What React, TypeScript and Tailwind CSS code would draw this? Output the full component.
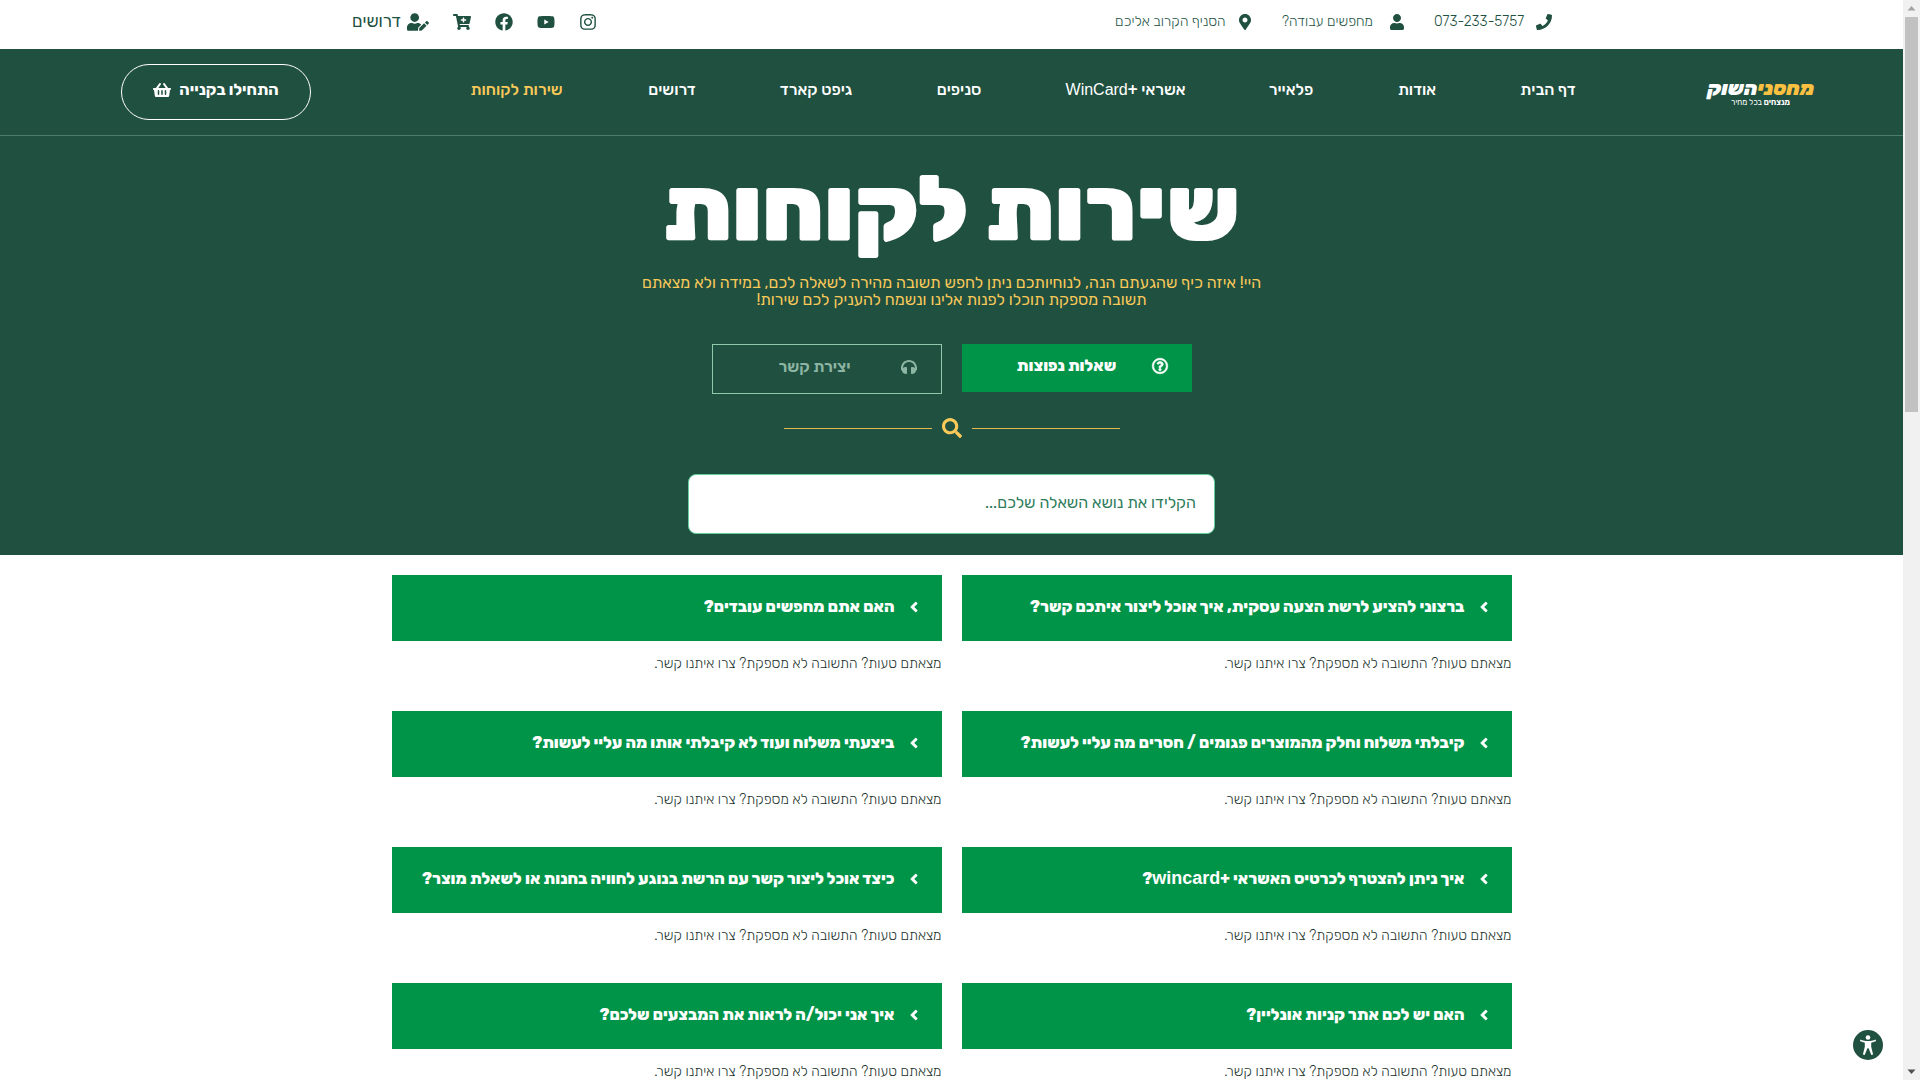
import React from "react";
import {
  FaPhone,
  FaUser,
  FaMapMarkerAlt,
  FaInstagram,
  FaYoutube,
  FaFacebook,
  FaCartPlus,
  FaUserEdit,
  FaShoppingBasket,
  FaRegQuestionCircle,
  FaHeadphones,
  FaSearch,
  FaAngleLeft,
} from "react-icons/fa";

const contacts = [
  { icon: FaPhone, text: "073-233-5757", width: "w-[118px]" },
  { icon: FaUser, text: "מחפשים עבודה?", width: "w-[123px]" },
  { icon: FaMapMarkerAlt, text: "הסניף הקרוב אליכם", width: "w-[138px]" },
];

const socials = [
  { icon: FaInstagram, label: "אינסטגרם" },
  { icon: FaYoutube, label: "יוטיוב" },
  { icon: FaFacebook, label: "פייסבוק" },
  { icon: FaCartPlus, label: "קנייה אונליין" },
];

const nav: { text: React.ReactNode; width: string; active?: boolean }[] = [
  { text: "דף הבית", width: "w-[56px]" },
  { text: "אודות", width: "w-[40px]" },
  { text: "פלאייר", width: "w-[46px]" },
  {
    text: (
      <span>
        אשראי +
        <span className="font-['Liberation_Sans',Arial,sans-serif] font-normal">WinCard</span>
      </span>
    ),
    width: "w-[119px]",
  },
  { text: "סניפים", width: "w-[48px]" },
  { text: "גיפט קארד", width: "w-[72px]" },
  { text: "דרושים", width: "w-[50px]" },
  { text: "שירות לקוחות", width: "w-[95px]", active: true },
];

const questions: React.ReactNode[] = [
  "ברצוני להציע לרשת הצעה עסקית, איך אוכל ליצור איתכם קשר?",
  "האם אתם מחפשים עובדים?",
  "קיבלתי משלוח וחלק מהמוצרים פגומים / חסרים מה עליי לעשות?",
  "ביצעתי משלוח ועוד לא קיבלתי אותו מה עליי לעשות?",
  <span>
    איך ניתן להצטרף לכרטיס האשראי +
    <span className="font-['Liberation_Sans',Arial,sans-serif] text-lg leading-5">wincard</span>?
  </span>,
  "כיצד אוכל ליצור קשר עם הרשת בנוגע לחוויה בחנות או לשאלת מוצר?",
  "האם יש לכם אתר קניות אונליין?",
  "איך אני יכול/ה לראות את המבצעים שלכם?",
];

function TopBar() {
  return (
    <div className="flex h-[49px] items-center justify-between bg-white pb-[5px] pe-[352px] ps-[351px] text-[#20503f]">
      <div className="flex items-center gap-[29px]">
        {contacts.map(({ icon: Icon, text, width }) => (
          <a
            key={text}
            href="#"
            className={`flex items-center justify-between whitespace-nowrap text-sm ${width}`}
          >
            <Icon className="size-4 shrink-0" />
            <span className="font-light">{text}</span>
          </a>
        ))}
      </div>
      <div className="flex items-center gap-6">
        {socials.map(({ icon: Icon, label }) => (
          <a key={label} href="#" aria-label={label} className="text-lg">
            <Icon />
          </a>
        ))}
        <a href="#" className="flex items-center gap-[6px] whitespace-nowrap text-[17px]">
          <FaUserEdit className="text-[22px]" />
          דרושים
        </a>
      </div>
    </div>
  );
}

function Logo() {
  return (
    <a
      href="#"
      aria-label="מחסני השוק"
      className="flex w-[107px] flex-col items-center whitespace-nowrap text-white"
    >
      <span className="text-xl leading-5 font-black italic">
        <span className="text-[#f9c041]">מחסני</span>השוק
      </span>
      <span className="text-[8px] leading-[9px]">
        <b>מנצחים</b> בכל מחיר
      </span>
    </a>
  );
}

function Header() {
  return (
    <header className="flex h-[87px] items-center border-b border-[#4f7b6a] bg-[#20503f] pe-[121px] ps-[89px] text-white">
      <Logo />
      <nav className="ms-[131px] flex items-center gap-[83px] pb-1 text-base font-medium">
        {nav.map(({ text, width, active }, i) => (
          <a
            key={i}
            href="#"
            className={`flex justify-center whitespace-nowrap ${width} ${active ? "text-[#f9c95a]" : ""}`}
          >
            {text}
          </a>
        ))}
      </nav>
      <button
        type="button"
        className="ms-auto flex h-14 w-[190px] items-center justify-center gap-2 rounded-[28px] border border-white pb-1 font-bold"
      >
        התחילו בקנייה
        <FaShoppingBasket className="text-lg" />
      </button>
    </header>
  );
}

function Hero() {
  return (
    <section className="flex flex-col items-center bg-[#20503f] pb-[21px] pt-[22px] text-white">
      <h1 className="text-[92px] leading-[104px] font-black">שירות לקוחות</h1>
      <p className="mt-3 w-[640px] text-center text-base leading-[17px] text-[#f9c95a]">
        היי! איזה כיף שהגעתם הנה, לנוחיותכם ניתן לחפש תשובה מהירה לשאלה לכם, במידה ולא מצאתם
        <br />
        תשובה מספקת תוכלו לפנות אלינו ונשמח להעניק לכם שירות!
      </p>
      <div className="mt-9 flex items-start gap-5">
        <button
          type="button"
          className="flex h-12 w-[230px] items-center bg-[#009448] pb-1 ps-6 font-extrabold"
        >
          <FaRegQuestionCircle className="size-4 shrink-0 overflow-visible stroke-current stroke-[20px]" />
          <span className="grow pe-5 text-center">שאלות נפוצות</span>
        </button>
        <button
          type="button"
          className="flex h-[50px] w-[230px] items-center border border-[#90c8ae] pb-1 ps-6 font-semibold text-[#8db5a4]"
        >
          <FaHeadphones className="size-4 shrink-0" />
          <span className="grow pe-4 text-center">יצירת קשר</span>
        </button>
      </div>
      <div className="mt-6 flex w-[336px] items-center gap-[10px] text-[#f9c95a]">
        <span className="h-px grow bg-[#e5b94f]" />
        <FaSearch className="size-5" />
        <span className="h-px grow bg-[#e5b94f]" />
      </div>
      <input
        type="text"
        aria-label="חיפוש שאלה"
        placeholder="הקלידו את נושא השאלה שלכם..."
        className="mt-9 h-[60px] w-[527px] rounded-lg border border-[#61ce9b] bg-white px-[18px] pb-1 text-base text-[#20503f] outline-none placeholder:text-[#2f7d5c]"
      />
    </section>
  );
}

function Faq() {
  return (
    <section className="mx-auto grid w-full max-w-[1120px] grid-cols-2 gap-x-5 gap-y-[37px] pt-5">
      {questions.map((q, i) => (
        <article key={i}>
          <h2>
            <button
              type="button"
              className="flex h-[66px] w-full items-center gap-[14px] bg-[#009448] px-6 pb-0.5 text-start font-extrabold whitespace-nowrap text-white"
            >
              <FaAngleLeft className="-ms-px size-4 w-2.5 shrink-0 overflow-visible stroke-current stroke-[16px]" />
              {q}
            </button>
          </h2>
          <p className="mt-3 text-sm leading-[21px] font-light text-[#20302a]">
            מצאתם טעות? התשובה לא מספקת? <a href="#">צרו איתנו קשר.</a>
          </p>
        </article>
      ))}
    </section>
  );
}

function ScrollRail() {
  return (
    <div aria-hidden="true" className="flex w-[17px] shrink-0 flex-col items-center bg-[#f1f1f1]">
      <svg viewBox="0 0 17 17" className="size-[17px] shrink-0 fill-[#a3a3a3]">
        <path d="M8.500 6l4 4.500h-8z" />
      </svg>
      <div className="h-[395px] w-[13px] bg-[#c1c1c1]" />
      <svg viewBox="0 0 17 17" className="mt-auto size-[17px] shrink-0 fill-[#505050]">
        <path d="M8.500 11l4-4.500h-8z" />
      </svg>
    </div>
  );
}

function AccessibilityButton() {
  return (
    <button
      type="button"
      aria-label="נגישות"
      className="fixed right-[37px] bottom-5 size-[30px] rounded-full bg-[#20503f]"
    >
      <svg viewBox="0 0 30 30" className="size-full fill-white">
        <circle cx="15" cy="7.500" r="2.300" />
        <path d="M7.500 9.600c2 1 3.500 1.300 5.300 1.400h4.400c1.800-.1 3.300-.4 5.300-1.400l.6 1.500c-1.600.9-3 1.300-4.900 1.600v4.100l1.900 7.600-1.800.5-2.700-6.600h-1.200l-2.700 6.600-1.800-.5 1.900-7.600v-4.100c-1.900-.3-3.300-.7-4.900-1.600z" />
      </svg>
    </button>
  );
}

export default function App() {
  return (
    <div
      dir="rtl"
      className="flex h-screen overflow-hidden bg-white font-[Rubik,'Open_Sans','Liberation_Sans',sans-serif]"
    >
      <ScrollRail />
      <main className="min-w-0 grow overflow-hidden">
        <TopBar />
        <Header />
        <Hero />
        <Faq />
      </main>
      <AccessibilityButton />
    </div>
  );
}
